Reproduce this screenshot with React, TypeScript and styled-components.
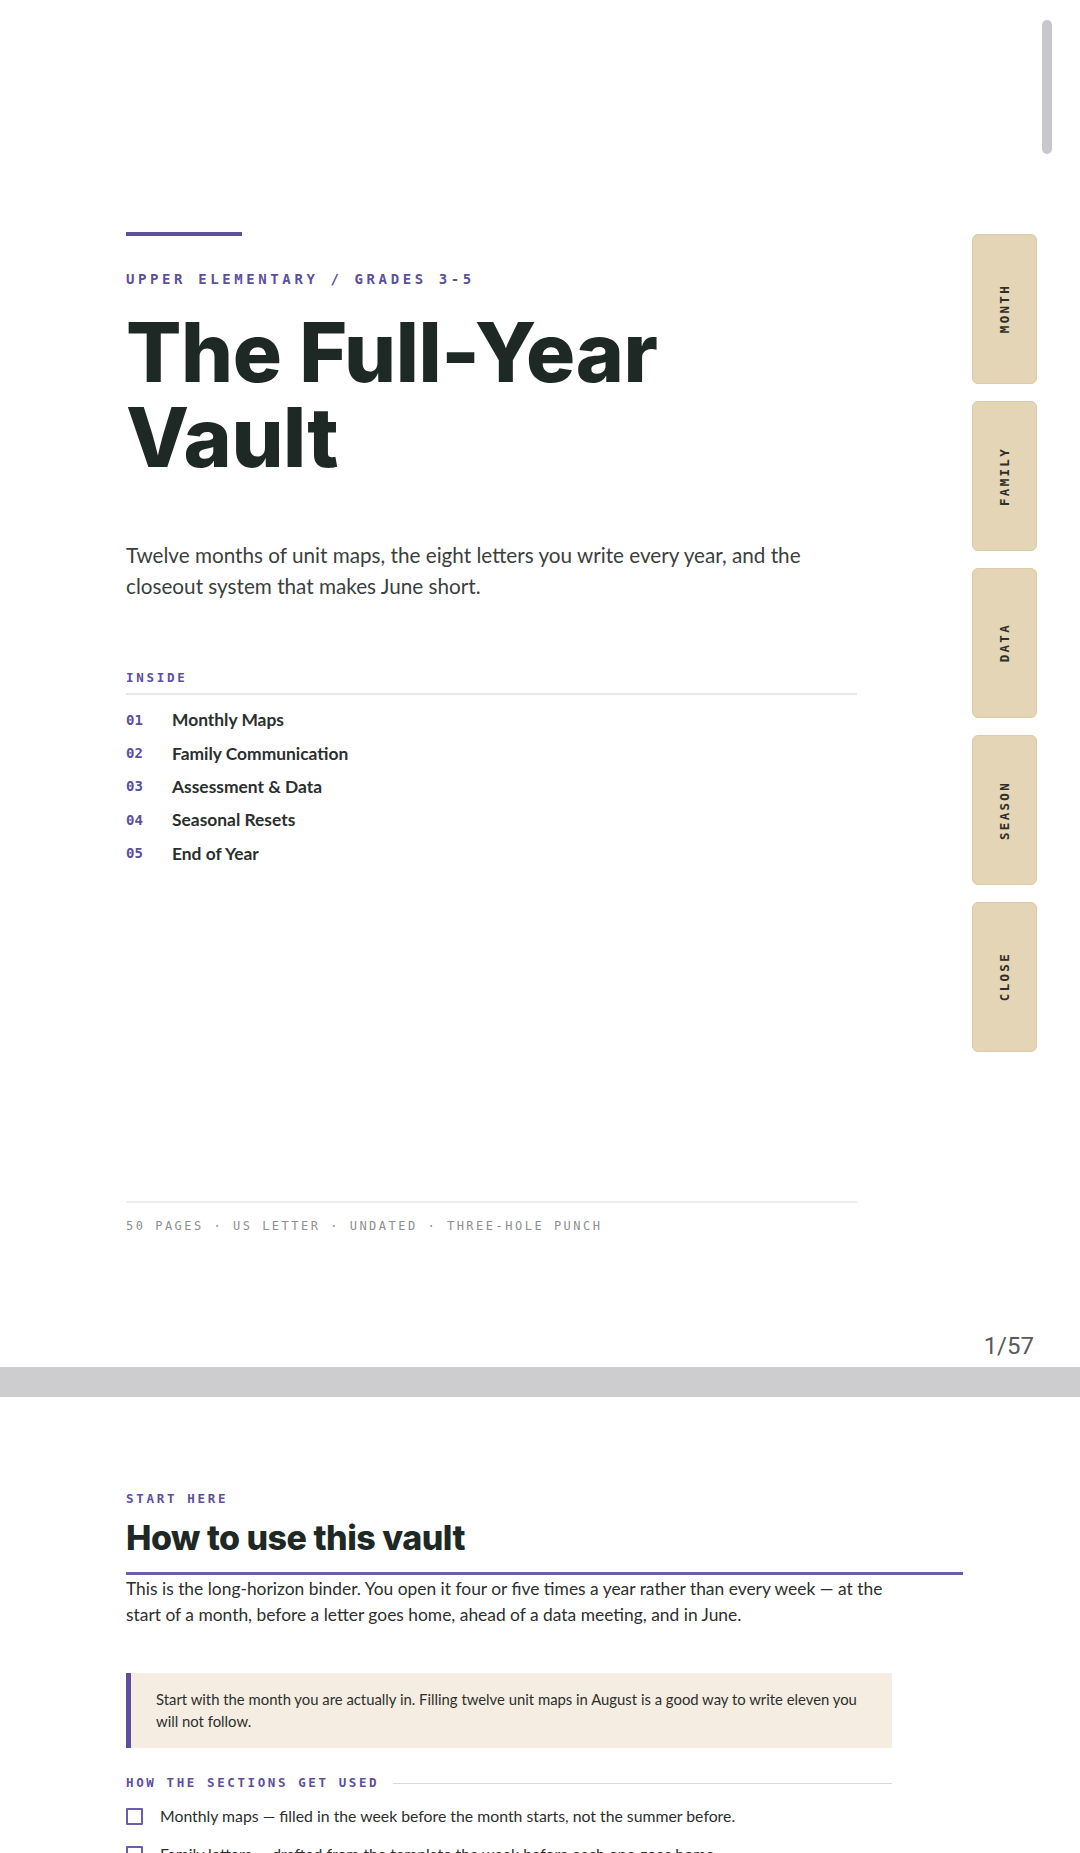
import * as React from 'react';
import styled, { createGlobalStyle } from 'styled-components';

const PURPLE = '#5b4f9e';
const INK = '#1e2926';
const MONO = `'DejaVu Sans Mono', 'Liberation Mono', monospace`;
const BODY = `Lato, 'Noto Sans', sans-serif`;
const DISPLAY = `Inter, 'Noto Sans', sans-serif`;

const contents = [
  { num: '01', title: 'Monthly Maps' },
  { num: '02', title: 'Family Communication' },
  { num: '03', title: 'Assessment & Data' },
  { num: '04', title: 'Seasonal Resets' },
  { num: '05', title: 'End of Year' },
];

const tabs = ['MONTH', 'FAMILY', 'DATA', 'SEASON', 'CLOSE'];

const usage = [
  'Monthly maps — filled in the week before the month starts, not the summer before.',
  'Family letters — drafted from the template the week before each one goes home.',
  'Assessment & data — pulled out ahead of every data meeting and conference night.',
];

export default function App() {
  return (
    <>
      <GlobalStyle />
      <Viewer>
        <CoverPage>
          <CoverMain>
            <AccentBar />
            <Eyebrow>UPPER ELEMENTARY / GRADES 3-5</Eyebrow>
            <Title>
              The Full-Year
              <br />
              Vault
            </Title>
            <Lede>
              Twelve months of unit maps, the eight letters you write every year, and the closeout system
              that makes June short.
            </Lede>

            <InsideLabel>INSIDE</InsideLabel>
            <ContentsList>
              {contents.map((item) => (
                <ContentsItem key={item.num}>
                  <ContentsNum>{item.num}</ContentsNum>
                  <ContentsTitle>{item.title}</ContentsTitle>
                </ContentsItem>
              ))}
            </ContentsList>

            <CoverFooter>50 PAGES · US LETTER · UNDATED · THREE-HOLE PUNCH</CoverFooter>
          </CoverMain>

          <TabRail>
            {tabs.map((tab) => (
              <Tab key={tab}>
                <TabLabel>{tab}</TabLabel>
              </Tab>
            ))}
            <PageNumber>1/57</PageNumber>
          </TabRail>
        </CoverPage>

        <Page>
          <SectionKicker>START HERE</SectionKicker>
          <SectionTitle>How to use this vault</SectionTitle>
          <Paragraph>
            This is the long-horizon binder. You open it four or five times a year rather than every week — at
            the start of a month, before a letter goes home, ahead of a data meeting, and in June.
          </Paragraph>

          <Callout>
            Start with the month you are actually in. Filling twelve unit maps in August is a good way to write
            eleven you will not follow.
          </Callout>

          <RuleHeading>
            <span>HOW THE SECTIONS GET USED</span>
          </RuleHeading>
          <CheckList>
            {usage.map((line) => (
              <CheckItem key={line}>
                <CheckBox />
                <span>{line}</span>
              </CheckItem>
            ))}
          </CheckList>
        </Page>
      </Viewer>
      <ScrollThumb />
    </>
  );
}

const GlobalStyle = createGlobalStyle`
  html, body {
    margin: 0;
    padding: 0;
    background: #cdcdd0;
  }
  body {
    font-family: ${BODY};
    color: #2b2f2e;
    -webkit-font-smoothing: antialiased;
  }
  * {
    box-sizing: border-box;
  }
`;

const Viewer = styled.main`
  display: flex;
  flex-direction: column;
  gap: 30px;
  width: 1080px;
`;

const CoverPage = styled.section`
  display: flex;
  height: 1367px;
  background: #fff;
  padding: 232px 43px 0 126px;
`;

const CoverMain = styled.div`
  display: flex;
  flex-direction: column;
  width: 731px;
`;

const AccentBar = styled.div`
  width: 116px;
  height: 4px;
  background: ${PURPLE};
`;

const Eyebrow = styled.div`
  margin-top: 33px;
  font-family: ${MONO};
  font-weight: 700;
  font-size: 14px;
  line-height: 20px;
  letter-spacing: 3.6px;
  color: ${PURPLE};
`;

const Title = styled.h1`
  margin: 21px 0 0;
  font-family: ${DISPLAY};
  font-weight: 800;
  font-size: 82px;
  line-height: 85px;
  letter-spacing: -0.4px;
  color: ${INK};
`;

const Lede = styled.p`
  margin: 60px 0 0;
  max-width: 700px;
  font-size: 20.7px;
  line-height: 31px;
  color: #3a3f3e;
`;

const InsideLabel = styled.div`
  margin-top: 68px;
  padding-bottom: 7px;
  border-bottom: 2px solid #e8eaea;
  font-family: ${MONO};
  font-weight: 700;
  font-size: 12.5px;
  line-height: 16px;
  letter-spacing: 2.7px;
  color: ${PURPLE};
`;

const ContentsList = styled.ol`
  list-style: none;
  margin: 8px 0 0;
  padding: 0;
`;

const ContentsItem = styled.li`
  display: flex;
  align-items: center;
  height: 33.4px;
`;

const ContentsNum = styled.span`
  width: 46px;
  font-family: ${MONO};
  font-weight: 700;
  font-size: 14px;
  color: ${PURPLE};
`;

const ContentsTitle = styled.span`
  font-weight: 700;
  font-size: 17.4px;
  color: #2a2f2e;
`;

const CoverFooter = styled.div`
  margin-top: auto;
  margin-bottom: 132px;
  padding-top: 14px;
  border-top: 2px solid #eceeee;
  font-family: ${MONO};
  font-size: 12px;
  line-height: 18px;
  letter-spacing: 2.5px;
  color: #8c9090;
`;

const TabRail = styled.aside`
  display: flex;
  flex-direction: column;
  align-items: flex-end;
  gap: 17px;
  margin-left: auto;
  padding-top: 2px;
`;

const Tab = styled.div`
  display: flex;
  align-items: center;
  justify-content: center;
  width: 65px;
  height: 150px;
  background: #e3d5b5;
  border: 1px solid #dccca6;
  border-radius: 6px;
`;

const TabLabel = styled.span`
  writing-mode: vertical-rl;
  transform: rotate(180deg);
  font-family: ${MONO};
  font-weight: 700;
  font-size: 12.5px;
  letter-spacing: 2.3px;
  color: #2f2e29;
`;

const PageNumber = styled.div`
  margin-top: auto;
  padding: 0 3px 7px 0;
  font-family: Roboto, 'Noto Sans', sans-serif;
  font-size: 24px;
  line-height: 28px;
  color: #5a5a5a;
`;

const Page = styled.section`
  display: flex;
  flex-direction: column;
  min-height: 1000px;
  background: #fff;
  padding: 94px 117px 0 126px;
`;

const SectionKicker = styled.div`
  font-family: ${MONO};
  font-weight: 700;
  font-size: 12.5px;
  line-height: 16px;
  letter-spacing: 2.7px;
  color: ${PURPLE};
`;

const SectionTitle = styled.h2`
  margin: 11px 0 0;
  padding-bottom: 14px;
  border-bottom: 3px solid #6a5eab;
  font-family: ${DISPLAY};
  font-weight: 800;
  font-size: 34px;
  line-height: 40px;
  letter-spacing: -0.5px;
  color: ${INK};
`;

const Paragraph = styled.p`
  margin: 1px 0 0;
  max-width: 766px;
  font-size: 17.4px;
  line-height: 26px;
  color: #2b2f2e;
`;

const Callout = styled.div`
  margin-top: 45px;
  max-width: 766px;
  padding: 16px 26px 16px 25px;
  background: #f5ede1;
  border-left: 5px solid ${PURPLE};
  font-size: 14.85px;
  line-height: 21.5px;
  color: #2b2f2e;
`;

const RuleHeading = styled.div`
  display: flex;
  align-items: center;
  gap: 14px;
  max-width: 766px;
  margin-top: 27px;
  font-family: ${MONO};
  font-weight: 700;
  font-size: 12.5px;
  line-height: 16px;
  letter-spacing: 2.6px;
  color: ${PURPLE};

  &::after {
    content: '';
    flex: 1;
    height: 1px;
    background: #d5dadd;
  }
`;

const CheckList = styled.ul`
  list-style: none;
  margin: 12px 0 0;
  padding: 0;
  display: flex;
  flex-direction: column;
  gap: 12px;
`;

const CheckItem = styled.li`
  display: flex;
  align-items: center;
  gap: 17px;
  font-size: 15.8px;
  line-height: 26px;
  color: #2b2f2e;
`;

const CheckBox = styled.span`
  flex: none;
  width: 17px;
  height: 17px;
  border: 2px solid #6a5eab;
  border-radius: 1px;
`;

const ScrollThumb = styled.div`
  position: fixed;
  top: 20px;
  left: 1042px;
  width: 10px;
  height: 134px;
  border-radius: 5px;
  background: #c8c8cc;
`;
